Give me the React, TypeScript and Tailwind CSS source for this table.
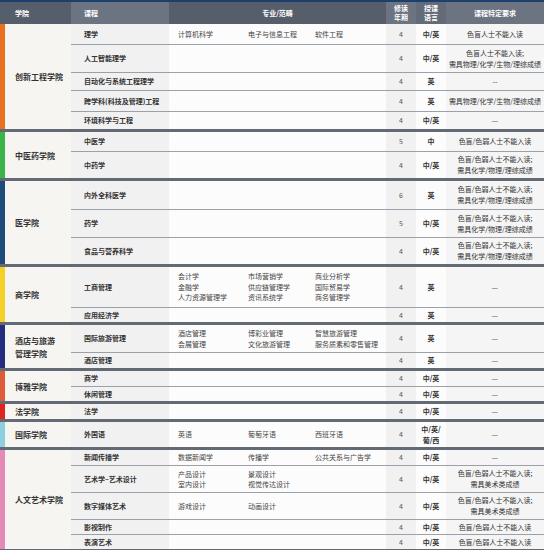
import React from "react";

type Course = {
    name: string;
    h: number;
    majors?: string[][];
    years: string;
    lang: string[];
    req: string[];
};

type School = {
    name: string[];
    color: string;
    courses: Course[];
};

const blind = ["色盲/色弱人士不能入读;", "需具化学/物理/理综成绩"];
const art = ["色盲/色弱人士不能入读;", "需具美术类成绩"];

const schools: School[] = [
    {
        name: ["创新工程学院"],
        color: "bg-[#e8711f]",
        courses: [
            { name: "理学", h: 20, majors: [["计算机科学"], ["电子与信息工程"], ["软件工程"]], years: "4", lang: ["中/英"], req: ["色盲人士不能入读"] },
            { name: "人工智能理学", h: 28, years: "4", lang: ["中/英"], req: ["色盲人士不能入读;", "需具物理/化学/生物/理综成绩"] },
            { name: "自动化与系统工程理学", h: 18, years: "4", lang: ["英"], req: ["--"] },
            { name: "跨学科(科技及管理)工程", h: 21, years: "4", lang: ["英"], req: ["需具物理/化学/生物/理综成绩"] },
            { name: "环境科学与工程", h: 18, years: "4", lang: ["中/英"], req: ["—"] },
        ],
    },
    {
        name: ["中医药学院"],
        color: "bg-[#3bb54a]",
        courses: [
            { name: "中医学", h: 19, years: "5", lang: ["中"], req: ["色盲/色弱人士不能入读"] },
            { name: "中药学", h: 27, years: "4", lang: ["中/英"], req: blind },
        ],
    },
    {
        name: ["医学院"],
        color: "bg-[#1d4b7a]",
        courses: [
            { name: "内外全科医学", h: 28, years: "6", lang: ["英"], req: blind },
            { name: "药学", h: 28, years: "5", lang: ["中/英"], req: blind },
            { name: "食品与营养科学", h: 27, years: "4", lang: ["中/英"], req: blind },
        ],
    },
    {
        name: ["商学院"],
        color: "bg-[#f4d029]",
        courses: [
            {
                name: "工商管理",
                h: 40,
                majors: [
                    ["会计学", "金融学", "人力资源管理学"],
                    ["市场营销学", "供应链管理学", "资讯系统学"],
                    ["商业分析学", "国际贸易学", "商务管理学"],
                ],
                years: "4",
                lang: ["英"],
                req: ["—"],
            },
            { name: "应用经济学", h: 15, years: "4", lang: ["英"], req: ["—"] },
        ],
    },
    {
        name: ["酒店与旅游", "管理学院"],
        color: "bg-[#252c7d]",
        courses: [
            {
                name: "国际旅游管理",
                h: 27,
                majors: [
                    ["酒店管理", "会展管理"],
                    ["博彩业管理", "文化旅游管理"],
                    ["智慧旅游管理", "服务质素和零售管理"],
                ],
                years: "4",
                lang: ["英"],
                req: ["—"],
            },
            { name: "酒店管理", h: 16, years: "4", lang: ["英"], req: ["—"] },
        ],
    },
    {
        name: ["博雅学院"],
        color: "bg-[#df5b3a]",
        courses: [
            { name: "商学", h: 15, years: "4", lang: ["中/英"], req: ["—"] },
            { name: "休闲管理", h: 15, years: "4", lang: ["中/英"], req: ["—"] },
        ],
    },
    {
        name: ["法学院"],
        color: "bg-[#e0231f]",
        courses: [{ name: "法学", h: 15, years: "4", lang: ["中/英"], req: ["—"] }],
    },
    {
        name: ["国际学院"],
        color: "bg-[#8ecfdf]",
        courses: [
            { name: "外国语", h: 25, majors: [["英语"], ["葡萄牙语"], ["西班牙语"]], years: "4", lang: ["中/英/", "葡/西"], req: ["—"] },
        ],
    },
    {
        name: ["人文艺术学院"],
        color: "bg-[#e38bb6]",
        courses: [
            { name: "新闻传播学", h: 15, majors: [["数据新闻学"], ["传播学"], ["公共关系与广告学"]], years: "4", lang: ["中/英"], req: ["—"] },
            { name: "艺术学–艺术设计", h: 27, majors: [["产品设计", "室内设计"], ["景观设计", "视觉传达设计"]], years: "4", lang: ["中/英"], req: art },
            { name: "数字媒体艺术", h: 27, majors: [["游戏设计"], ["动画设计"]], years: "4", lang: ["中/英"], req: art },
            { name: "影视制作", h: 15, years: "4", lang: ["中/英"], req: ["色盲/色弱人士不能入读"] },
            { name: "表演艺术", h: 15, years: "4", lang: ["中/英"], req: ["色盲/色弱人士不能入读"] },
        ],
    },
];

const font = { fontFamily: '"Noto Sans CJK SC", "Noto Sans", sans-serif' };

function CourseRow({ c, first }: { c: Course; first: boolean }) {
    return (
        <div
            className={`flex ${first ? "" : "border-t border-[#9ca1a9]"}`}
            style={{ height: c.h }}
        >
            <div className="flex w-[98px] items-center bg-[#f1f1f1] pl-[13px] text-[7px] font-bold text-[#333]">
                {c.name}
            </div>
            <div className="flex w-[217px] items-center bg-[#fcfcfc] pl-[9px] text-[7px] leading-[10.5px] text-[#444]">
                {c.majors?.map((col, i) => (
                    <div key={i} className={i === 0 ? "w-[70px]" : i === 1 ? "w-[67px]" : ""}>
                        {col.map((l) => (
                            <div key={l}>{l}</div>
                        ))}
                    </div>
                ))}
            </div>
            <div className="flex w-[30px] items-center justify-center bg-[#f1f1f1] text-[7px] text-[#555]">
                {c.years}
            </div>
            <div className="flex w-[30px] flex-col items-center justify-center bg-[#fcfcfc] text-[7px] leading-[11px] font-semibold text-[#333]">
                {c.lang.map((l) => (
                    <div key={l}>{l}</div>
                ))}
            </div>
            <div className="flex w-[98px] flex-col items-center justify-center bg-[#f5f5f5] text-[7px] leading-[11px] text-[#333]">
                {c.req.map((l) => (
                    <div key={l}>{l}</div>
                ))}
            </div>
        </div>
    );
}

function SchoolBlock({ s }: { s: School }) {
    return (
        <div className="flex border-b-[3px] border-[#646a74]">
            <div className={`w-[5px] ${s.color}`} />
            <div className="flex w-[66px] flex-col justify-center bg-[#f7f5f2] pl-[10px] text-[8px] leading-[13px] font-semibold text-[#333]">
                {s.name.map((n) => (
                    <div key={n}>{n}</div>
                ))}
            </div>
            <div className="flex flex-col">
                {s.courses.map((c, i) => (
                    <CourseRow key={c.name + i} c={c} first={i === 0} />
                ))}
            </div>
        </div>
    );
}

export default function App() {
    return (
        <div className="min-h-[550px] w-[554px] bg-white" style={font}>
            <div className="w-[544px]">
                <div className="flex h-[24px] border-t-2 border-[#1c3f6e] text-[7px] font-semibold text-white">
                    <div className="flex w-[71px] items-center bg-[#575e6b] pl-[15px]">学院</div>
                    <div className="flex w-[98px] items-center bg-[#6c7381] pl-[13px]">课程</div>
                    <div className="flex w-[217px] items-center justify-center bg-[#575e6b]">专业/范畴</div>
                    <div className="flex w-[30px] flex-col items-center justify-center bg-[#6c7381] leading-[9.5px]">
                        <div>修读</div>
                        <div>年期</div>
                    </div>
                    <div className="flex w-[30px] flex-col items-center justify-center bg-[#646b78] leading-[9.5px]">
                        <div>授课</div>
                        <div>语言</div>
                    </div>
                    <div className="flex w-[98px] items-center justify-center bg-[#6c7381]">课程特定要求</div>
                </div>
                {schools.map((s) => (
                    <SchoolBlock key={s.name[0]} s={s} />
                ))}
            </div>
        </div>
    );
}
